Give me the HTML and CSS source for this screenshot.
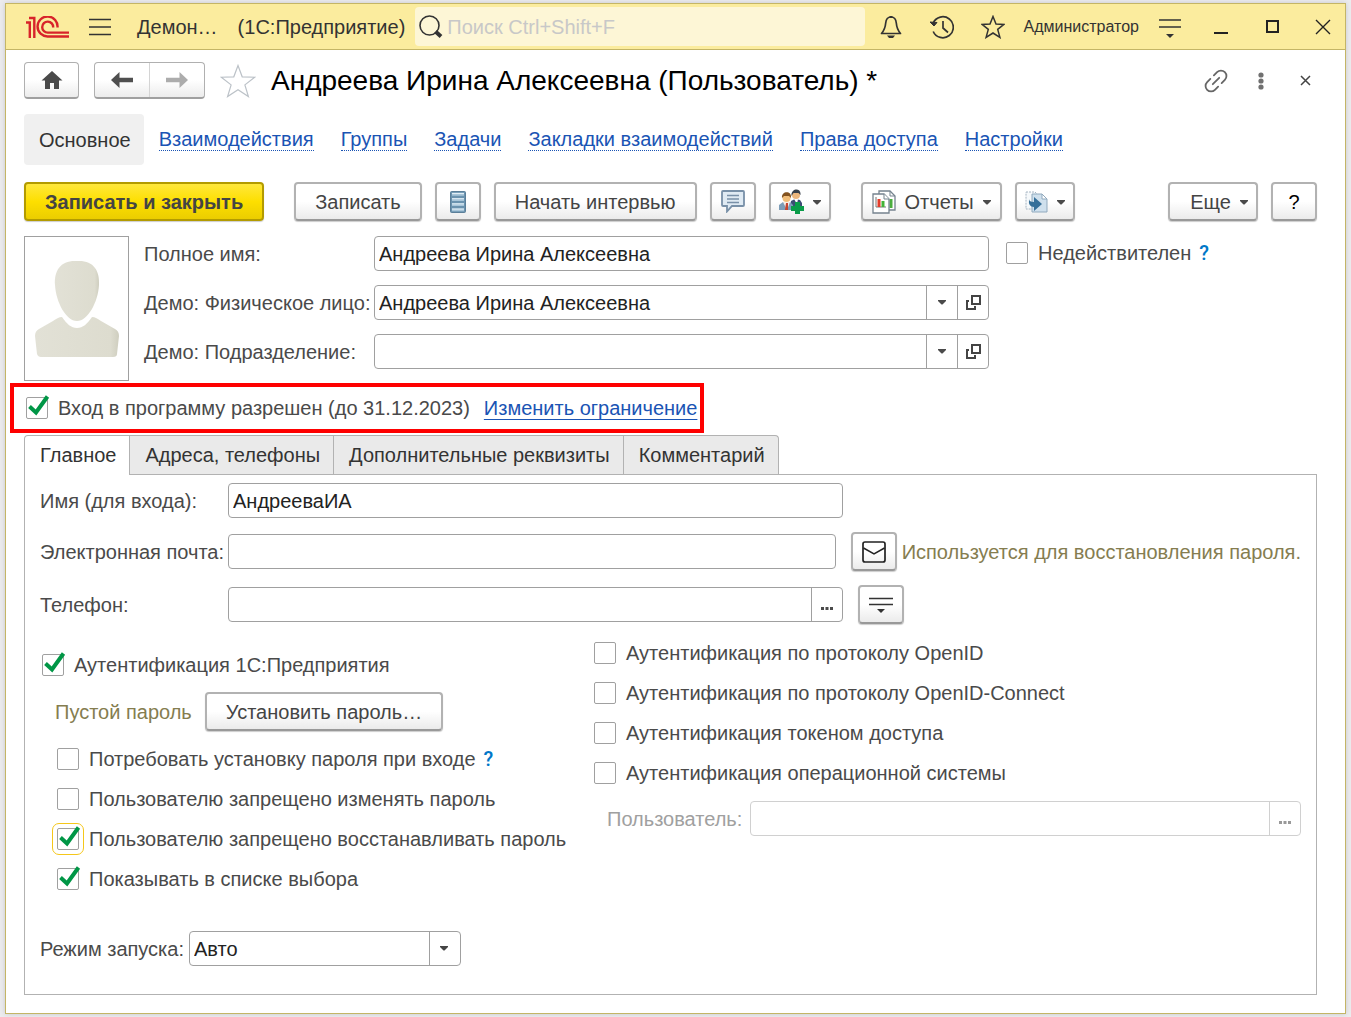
FILE: index.html
```html
<!DOCTYPE html>
<html lang="ru">
<head>
<meta charset="utf-8">
<meta name="viewport" content="width=device-width, initial-scale=1">
<title>Андреева Ирина Алексеевна (Пользователь)</title>
<link rel="stylesheet" href="styles.css">
</head>
<body>
<svg class="defs" aria-hidden="true">
  <symbol id="caret" viewBox="0 0 8 5"><path d="M0 0h8v1L4.500 4.500h-1L0 1z" fill="#4a4a4a"/></symbol>
  <symbol id="open" viewBox="0 0 15 15"><path d="M6 1h8v8H6zM3 6H1v8h8v-3" fill="none" stroke="#444" stroke-width="2"/></symbol>
  <symbol id="dots" viewBox="0 0 12 3"><path d="M0 0h3v3H0zM4.500 0h3v3h-3zM9 0h3v3H9z" fill="currentColor"/></symbol>
  <symbol id="lines" viewBox="0 0 22 22"><path d="M0 4h22M0 11h22" stroke="#333" stroke-width="1.600"/><path d="M7 18h8l-4 4z" fill="#333"/></symbol>
</svg>
<div class="window">
  <header class="titlebar">
    <svg class="logo" width="44" height="22" viewBox="0 0 44 22" role="img" aria-label="1С"><g fill="none" stroke="#d8232a" stroke-width="2.400"><path d="M1 6.500H4.800V22M4 2H9.300V22"/><path d="M32.500 11.500A10 10 0 1 0 23 20.500H44"/><path d="M28.200 11.500A5.500 5.500 0 1 0 23 16.600H44"/></g></svg>
    <button class="icon-btn menu" aria-label="Главное меню"><svg width="22" height="18" viewBox="0 0 22 18"><path d="M0 1.500h22M0 9h22M0 16.500h22" stroke="#333" stroke-width="1.500"/></svg></button>
    <span class="app-name">Демон…</span>
    <span class="platform">(1С:Предприятие)</span>
    <div class="search">
      <svg width="24" height="24" viewBox="0 0 24 24"><circle cx="10.500" cy="10.500" r="9.500" fill="none" stroke="#333" stroke-width="1.600"/><path d="M16.500 16.500l5.500 5" stroke="#333" stroke-width="4"/></svg>
      <input type="search" placeholder="Поиск Ctrl+Shift+F" aria-label="Поиск">
    </div>
    <div class="title-tools">
      <button class="icon-btn" aria-label="Уведомления"><svg width="22" height="24" viewBox="0 0 22 24"><path d="M11 2c-3.500 0-5 2.500-5.300 6C5.300 13 4.500 15 1.500 18.500h19C17.500 15 16.700 13 16.300 8 16 4.500 14.500 2 11 2z" fill="none" stroke="#333" stroke-width="1.700" stroke-linejoin="round"/><path d="M9.500 1h3v2h-3zM7 20.500h8l-2 2.500H9z" fill="#333"/></svg></button>
      <button class="icon-btn" aria-label="История"><svg width="24" height="24" viewBox="0 0 24 24"><path d="M3.200 8A10.500 10.500 0 1 1 3.200 16.500M13 6v7l5 4.500" fill="none" stroke="#333" stroke-width="1.700"/><path d="M0 7l7 .5L4 11z" fill="#333" stroke="#333"/></svg></button>
      <button class="icon-btn" aria-label="Избранное"><svg width="24" height="24" viewBox="0 0 24 24"><path d="M12 1.500l3 7.500 8 .4-6.300 5 2.200 8L12 18l-6.900 4.400 2.200-8L1 9.400 9 9z" fill="none" stroke="#333" stroke-width="1.500"/></svg></button>
      <a class="account" href="#">Администратор</a>
      <button class="icon-btn" aria-label="Настройка"><svg width="22" height="22"><use href="#lines"/></svg></button>
      <button class="icon-btn" aria-label="Свернуть"><svg width="14" height="14"><path d="M0 13h14" stroke="#222" stroke-width="2"/></svg></button>
      <button class="icon-btn" aria-label="Развернуть"><svg width="13" height="13"><path d="M1 1h11v11H1z" fill="none" stroke="#222" stroke-width="2"/></svg></button>
      <button class="icon-btn" aria-label="Закрыть"><svg width="16" height="16"><path d="M1 1l14 14M15 1L1 15" stroke="#222" stroke-width="1.400"/></svg></button>
    </div>
  </header>

  <main class="content">
    <div class="heading">
      <button class="btn-nav" aria-label="Домой"><svg width="22" height="18" viewBox="0 0 22 18"><path d="M11 0l10.500 9.500H18V18h-5v-6H9v6H4V9.500H.5z" fill="#4a4a4a"/></svg></button>
      <div class="nav-pair">
        <button aria-label="Назад"><svg width="22" height="16" viewBox="0 0 22 16"><path d="M0 8l8.500-8v5.800H22v4.400H8.500V16z" fill="#4f4f4f"/></svg></button>
        <button aria-label="Вперед"><svg width="22" height="16" viewBox="0 0 22 16"><path d="M22 8l-8.500-8v5.800H0v4.400h13.500V16z" fill="#acacac"/></svg></button>
      </div>
      <button class="favorite" aria-label="В избранное"><svg width="36" height="34" viewBox="0 0 36 34"><path d="M18 1.500l4.200 11.300 12.500.4-9.800 7.700 3.500 11.600L18 25.700 7.600 32.500l3.500-11.600-9.800-7.700 12.500-.4z" fill="none" stroke="#bcc2c8" stroke-width="1.200"/></svg></button>
      <h1>Андреева Ирина Алексеевна (Пользователь) *</h1>
      <div class="heading-tools">
        <button aria-label="Ссылка"><svg width="24" height="24" viewBox="0 0 24 24"><g fill="none" stroke="#666" stroke-width="1.800" stroke-linecap="round" transform="rotate(-45 12 12)"><path d="M9.500 6.500H5a5.500 5.500 0 0 0 0 11h4.500M14.500 6.500H19a5.500 5.500 0 0 1 0 11h-4.500M7.500 12h9"/></g></svg></button>
        <button aria-label="Действия"><svg width="6" height="18" viewBox="0 0 6 18"><g fill="#707070"><circle cx="3" cy="3" r="2.600"/><circle cx="3" cy="9" r="2.600"/><circle cx="3" cy="15" r="2.600"/></g></svg></button>
        <button aria-label="Закрыть форму"><svg width="11" height="11"><path d="M1 1l9 9M10 1L1 10" stroke="#444" stroke-width="1.500"/></svg></button>
      </div>
    </div>

    <nav class="sections">
      <span class="current">Основное</span>
      <a href="#">Взаимодействия</a>
      <a href="#">Группы</a>
      <a href="#">Задачи</a>
      <a href="#">Закладки взаимодействий</a>
      <a href="#">Права доступа</a>
      <a href="#">Настройки</a>
    </nav>

    <div class="commands">
      <button class="btn primary">Записать и закрыть</button>
      <button class="btn">Записать</button>
      <button class="btn square" aria-label="Список"><svg width="16" height="22" viewBox="0 0 16 22"><rect x=".5" y=".5" width="15" height="21" rx="1" fill="#6b93af" stroke="#5b7f99"/><path d="M2 3.200h12M2 8.400h12M2 13.600h12M2 18.800h12" stroke="#a9c6d9" stroke-width="3"/><path d="M2 2.500h12M2 7.700h12M2 12.900h12M2 18.100h12" stroke="#e2eef5"/></svg></button>
      <button class="btn">Начать интервью</button>
      <button class="btn square" aria-label="Обсуждение"><svg width="24" height="23" viewBox="0 0 24 23"><path d="M2 1h20q1 0 1 1v13q0 1-1 1H11l-5 5.500V16H2q-1 0-1-1V2q0-1 1-1z" fill="#dfeaf3" stroke="#7890a8" stroke-width="1.800"/><path d="M6 5.500h12M6 9h12M6 12.500h12" stroke="#7890a8" stroke-width="1.400"/></svg></button>
      <button class="btn drop" aria-label="Добавить пользователя"><svg width="25" height="25" viewBox="0 0 25 25"><path d="M12 12l4-2 5 1 2 3v7H11z" fill="#3c4c75"/><path d="M15 10h4l-1 5z" fill="#fff"/><circle cx="17" cy="6" r="4" fill="#edb77d"/><path d="M12.500 7c-1-8 10-9 9-1l-2-2h-5z" fill="#39404a"/><path d="M0 21v-5l4-3h7l3 3v5z" fill="#7d9db8"/><path d="M4 13h7l-3 8z" fill="#f7eee7"/><path d="M7 14h2v7H6z" fill="#c7452f"/><circle cx="7.500" cy="9" r="4" fill="#f1bd78"/><path d="M3 9c-1-7 10-8 9 0l-2-2H5z" fill="#83521f"/><path d="M16 13h5v4h4v5h-4v3h-5v-3h-4v-5h4z" fill="#0a9c49"/></svg><svg class="caret" width="8" height="5"><use href="#caret"/></svg></button>
      <button class="btn drop reports"><svg width="24" height="24" viewBox="0 0 24 24"><path d="M7 1h11l5 5v14H7z" fill="#fff" stroke="#75838e" stroke-width="1.300"/><path d="M18 1v5h5" fill="none" stroke="#75838e"/><path d="M19 9v9" stroke="#4cae3f" stroke-width="3"/><path d="M1 4h11l5 5v14H1z" fill="#fff" stroke="#75838e" stroke-width="1.300"/><path d="M12 4v5h5" fill="#fff" stroke="#75838e"/><path d="M4 7v10h10" fill="none" stroke="#777"/><path d="M7 9v8" stroke="#e33e2d" stroke-width="3"/><path d="M11 11v6" stroke="#45b337" stroke-width="3"/></svg><span>Отчеты</span><svg class="caret" width="8" height="5"><use href="#caret"/></svg></button>
      <button class="btn drop" aria-label="Создать на основании"><svg width="23" height="22" viewBox="0 0 23 22"><path d="M1 1h9l4 4v13H1z" fill="#f6f9fb" stroke="#a5b4c2" stroke-dasharray="2 1"/><path d="M7 3h10l5 5v13H7z" fill="#cfe0ed" stroke="#90a9bd"/><path d="M17 3v5h5z" fill="#fff" stroke="#90a9bd"/><path d="M4 8q0 3 5 3V6l8 7-8 7v-4Q3 16 4 8z" fill="#356f99"/></svg><svg class="caret" width="8" height="5"><use href="#caret"/></svg></button>
      <button class="btn drop more"><span>Еще</span><svg class="caret" width="8" height="5"><use href="#caret"/></svg></button>
      <button class="btn square help">?</button>
    </div>

    <section class="person">
      <div class="photo"><svg width="84" height="98" viewBox="0 0 84 98" role="img" aria-label="Фото"><defs><linearGradient id="skin" x1="0" x2="1"><stop offset="0" stop-color="#e2e1d6"/><stop offset=".9" stop-color="#dddccf"/><stop offset="1" stop-color="#cfcebf"/></linearGradient></defs><g fill="url(#skin)"><path d="M42 1C58 0 65 10 64 25 63 42 53 61 42 61S21 42 20 25C19 10 26 0 42 1z"/><path d="M27 57c5 7 9 11 15 11s10-4 15-11c3 0 6 2 9 4l14 8q4 2 4 7l-2 18q0 3-4 3H6q-3 0-4-3L0 76q0-5 4-7l14-8c3-2 6-4 9-4z"/></g></svg></div>
      <div class="person-fields">
        <label for="full">Полное имя:</label>
        <div class="field"><input id="full" value="Андреева Ирина Алексеевна"></div>
        <label for="phys">Демо: Физическое лицо:</label>
        <div class="field"><input id="phys" value="Андреева Ирина Алексеевна"><button aria-label="Выбрать"><svg width="8" height="5"><use href="#caret"/></svg></button><button aria-label="Открыть"><svg width="15" height="15"><use href="#open"/></svg></button></div>
        <label for="dept">Демо: Подразделение:</label>
        <div class="field"><input id="dept"><button aria-label="Выбрать"><svg width="8" height="5"><use href="#caret"/></svg></button><button aria-label="Открыть"><svg width="15" height="15"><use href="#open"/></svg></button></div>
      </div>
      <div class="invalid"><label class="check"><input type="checkbox">Недействителен</label><a class="hint" href="#">?</a></div>
    </section>

    <div class="access">
      <label class="check"><input type="checkbox" checked>Вход в программу разрешен (до 31.12.2023)</label>
      <a href="#">Изменить ограничение</a>
    </div>

    <div class="tabs" role="tablist">
      <button role="tab" aria-selected="true">Главное</button>
      <button role="tab" aria-selected="false">Адреса, телефоны</button>
      <button role="tab" aria-selected="false">Дополнительные реквизиты</button>
      <button role="tab" aria-selected="false">Комментарий</button>
    </div>
    <section class="panel" role="tabpanel">
      <div class="row">
        <label for="login">Имя (для входа):</label>
        <div class="field"><input id="login" value="АндрееваИА"></div>
      </div>
      <div class="row">
        <label for="mail">Электронная почта:</label>
        <div class="field mail"><input id="mail" type="email"></div>
        <button class="btn square" aria-label="Написать письмо"><svg width="24" height="22" viewBox="0 0 24 22"><rect x="1" y="1" width="22" height="20" rx="2" fill="none" stroke="#222" stroke-width="1.700"/><path d="M1.500 7L12 13 22.500 7" fill="none" stroke="#222" stroke-width="1.500"/></svg></button>
        <span class="note">Используется для восстановления пароля.</span>
      </div>
      <div class="row">
        <label for="phone">Телефон:</label>
        <div class="field"><input id="phone" type="tel"><button aria-label="Выбрать телефон"><svg class="low" width="12" height="3"><use href="#dots"/></svg></button></div>
        <button class="btn square" aria-label="Команды телефона"><svg width="24" height="16" viewBox="0 0 24 16"><path d="M0 1.500h24M0 7.500h24" stroke="#333" stroke-width="1.600"/><path d="M8 12h8l-4 4z" fill="#333"/></svg></button>
      </div>

      <div class="auth">
        <div class="auth-own">
          <label class="check"><input type="checkbox" checked>Аутентификация 1С:Предприятия</label>
          <div class="password"><span class="note">Пустой пароль</span><button class="btn">Установить пароль…</button></div>
          <div class="options">
            <div class="option"><label class="check"><input type="checkbox">Потребовать установку пароля при входе</label><a class="hint" href="#">?</a></div>
            <label class="check"><input type="checkbox">Пользователю запрещено изменять пароль</label>
            <label class="check focused"><input type="checkbox" checked>Пользователю запрещено восстанавливать пароль</label>
            <label class="check"><input type="checkbox" checked>Показывать в списке выбора</label>
          </div>
        </div>
        <div class="auth-other">
          <label class="check"><input type="checkbox">Аутентификация по протоколу OpenID</label>
          <label class="check"><input type="checkbox">Аутентификация по протоколу OpenID-Connect</label>
          <label class="check"><input type="checkbox">Аутентификация токеном доступа</label>
          <label class="check"><input type="checkbox">Аутентификация операционной системы</label>
          <div class="os-user">
            <label for="osuser">Пользователь:</label>
            <div class="field"><input id="osuser" disabled><button disabled aria-label="Выбрать пользователя"><svg class="low" width="12" height="3"><use href="#dots"/></svg></button></div>
          </div>
        </div>
      </div>

      <div class="launch">
        <label for="mode">Режим запуска:</label>
        <select id="mode"><option>Авто</option></select>
      </div>
    </section>
  </main>
</div>
</body>
</html>
```
FILE: styles.css
```css
* { box-sizing: border-box; }

body {
  margin: 0;
  padding: 3px 5px 4px;
  background: #ececee;
  color: #4a4a4a;
  font: 20px/24px "Liberation Sans", Arial, sans-serif;
}

button, input, select { font: inherit; color: inherit; }
button { margin: 0; padding: 0; border: 0; background: none; display: inline-flex; align-items: center; justify-content: center; }
svg { display: block; flex: none; }
a { color: #1a54b4; }
label, .note, .app-name, .platform { white-space: nowrap; }
.defs { position: absolute; width: 0; height: 0; }

.window { border: 1px solid #c4b566; background: #fff; box-shadow: 0 0 5px #c8c8cc; }

.titlebar {
  display: flex;
  align-items: center;
  height: 46px;
  padding: 0 2px 0 19px;
  background: #fbec9e;
  border-bottom: 1px solid #c4b566;
  color: #333;
}
.menu { margin: 0 17px 0 11px; }
.icon-btn { width: 40px; height: 40px; flex: none; }
.app-name { margin-right: 20px; }
.platform { margin-right: 10px; }
.search {
  display: flex;
  align-items: center;
  flex: 1;
  min-width: 0;
  height: 39px;
  padding-left: 4px;
  border-radius: 4px;
  background: #fdf6d6;
}
.search input { flex: 1; min-width: 0; border: 0; padding: 0 4px; background: none; outline: 0; }
.search input::placeholder { color: #c8c8c8; opacity: 1; }
.title-tools { display: flex; align-items: center; gap: 11px; margin-left: 6px; }
.account { font-size: 16px; color: #333; text-decoration: none; }

.content { padding: 12px 28px 18px 18px; }

.heading { display: flex; align-items: center; height: 37px; }
.btn-nav, .nav-pair {
  height: 37px;
  border: 1px solid #b0b0b0;
  border-bottom: 2px solid #a0a0a0;
  border-radius: 4px;
  background: linear-gradient(#fff 50%, #ececec);
}
.btn-nav { width: 55px; margin-right: 15px; }
.nav-pair { display: flex; width: 111px; margin-right: 15px; }
.nav-pair button { flex: 1; }
.nav-pair button + button { border-left: 1px solid #d4d4d4; }
.favorite { width: 36px; margin-right: 15px; }
h1 { flex: 1; min-width: 0; margin: 0; color: #000; font-size: 28px; line-height: 32px; font-weight: 400; white-space: nowrap; }
.heading-tools { display: flex; margin-right: -11px; }
.heading-tools button { width: 45px; height: 36px; }

.sections { display: flex; align-items: center; gap: 27px; margin-top: 15px; white-space: nowrap; }
.sections .current { padding: 14px 13px 13px 15px; margin-right: -12px; border-radius: 4px; background: #f0f0f0; color: #333; }
.sections a { line-height: 22px; text-decoration: none; border-bottom: 1px dotted #1a54b4; }

.commands { display: flex; gap: 13px; margin-top: 17px; }
.btn {
  flex: none;
  height: 39px;
  padding: 0 19px;
  border: 2px solid #b2b2b2;
  border-bottom-color: #999;
  border-radius: 4px;
  background: linear-gradient(#fff 50%, #ebebeb);
  box-shadow: 0 1px 1px #ccc;
  color: #444;
  white-space: nowrap;
}
.primary {
  margin-right: 17px;
  border-color: #b39b00;
  background: linear-gradient(#ffe83c, #fddf00 50%, #ebcd00);
  font-weight: 700;
}
.square { width: 46px; padding: 0; }
.drop { gap: 9px; padding: 0 8px; }
.caret { margin-top: 2px; }
.reports { padding: 0 9px; margin-left: 17px; }
.more { width: 90px; padding-left: 20px; margin-left: auto; }
.help { color: #000; }

.person { display: flex; margin-top: 15px; }
.photo { display: flex; align-items: center; justify-content: center; width: 105px; height: 145px; margin-right: 15px; border: 1px solid #a0a0a0; flex: none; }
.person-fields { display: grid; grid-template-columns: 230px minmax(0, 1fr); grid-auto-rows: 35px; row-gap: 14px; align-items: center; flex: 0 1 845px; }

.field { display: flex; flex: 0 1 615px; min-width: 0; height: 35px; border: 1px solid #a0a0a0; border-radius: 4px; background: #fff; }
.field input { flex: 1; min-width: 0; border: 0; padding: 0 4px; background: none; color: #222; outline: 0; }
.field button { width: 31px; border-left: 1px solid #a0a0a0; flex: none; }
.low { margin-top: 8px; }

.check { display: flex; align-items: center; gap: 10px; height: 24px; }
.check input { appearance: none; position: relative; flex: none; width: 22px; height: 22px; margin: 0; border: 1px solid #a0a0a0; border-radius: 2px; background: #fff; }
.check input:checked::after {
  content: "";
  position: absolute;
  left: -1px;
  top: -5px;
  width: 24px;
  height: 24px;
  background: url("data:image/svg+xml,%3Csvg xmlns='http://www.w3.org/2000/svg' viewBox='0 0 24 24'%3E%3Cpath d='M3.500 13.500l6.500 6L21.500 3.500' fill='none' stroke='%23009646' stroke-width='4'/%3E%3C/svg%3E");
}
.focused input { outline: 1px solid #f5c71a; outline-offset: 4px; }
.hint { color: #0077c8; font-family: Roboto, "Liberation Sans", sans-serif; font-weight: 500; text-decoration: none; }
.invalid { display: flex; gap: 8px; height: 24px; margin: 5px 0 0 17px; }

.access { display: flex; align-items: center; gap: 14px; width: fit-content; height: 50px; margin: 2px 0 2px -14px; padding: 0 3px 0 12px; border: 4px solid #fe0000; }
.access a { text-decoration: underline; text-decoration-thickness: 1px; text-underline-offset: 4px; white-space: nowrap; }

.tabs { display: flex; }
.tabs button { height: 39px; padding: 0 13px 0 15px; border: 1px solid #b2b2b2; border-width: 1px 1px 0 0; background: #eaeaea; color: #333; white-space: nowrap; }
.tabs button:first-child { border-left-width: 1px; border-radius: 4px 0 0; }
.tabs button:last-child { border-radius: 0 4px 0 0; }
.tabs [aria-selected="true"] { height: 40px; margin-bottom: -1px; padding-bottom: 1px; background: #fff; position: relative; }

.panel { padding: 8px 15px 28px; border: 1px solid #b2b2b2; }
.row { display: flex; align-items: center; }
.row + .row { margin-top: 14px; }
.row label { width: 188px; flex: none; }
.row .mail { flex-basis: 608px; }
.row .btn { margin-left: 15px; }
.row .note { margin-left: 5px; }
.note { color: #857d50; }

.auth { display: flex; margin-top: 17px; }
.auth-own { flex: 0 1 554px; padding: 12px 0 0 2px; }
.password { display: flex; align-items: center; gap: 13px; margin: 15px 0 16px 13px; }
.options { display: grid; gap: 16px; padding-left: 15px; }
.option { display: flex; gap: 8px; }
.auth-other { display: grid; align-content: start; gap: 16px; flex: 1; min-width: 0; }
.os-user { display: flex; align-items: center; gap: 8px; margin-left: 13px; color: #a0a0a0; }
.os-user .field { flex: 1; border-color: #d0d0d0; }
.os-user .field button { border-color: #d0d0d0; color: #999; }

.launch { display: flex; align-items: center; gap: 5px; margin-top: 40px; }
.launch select {
  appearance: none;
  width: 272px;
  height: 35px;
  padding: 0 36px 0 4px;
  border: 1px solid #a0a0a0;
  border-radius: 4px;
  background: #fff url("data:image/svg+xml,%3Csvg xmlns='http://www.w3.org/2000/svg' width='31' height='33'%3E%3Cpath d='M.5 0v33' stroke='%23a0a0a0'/%3E%3Cpath d='M11 14h8v1l-3.500 3.500h-1L11 15z' fill='%23444'/%3E%3C/svg%3E") right center no-repeat;
  color: #222;
}
```
